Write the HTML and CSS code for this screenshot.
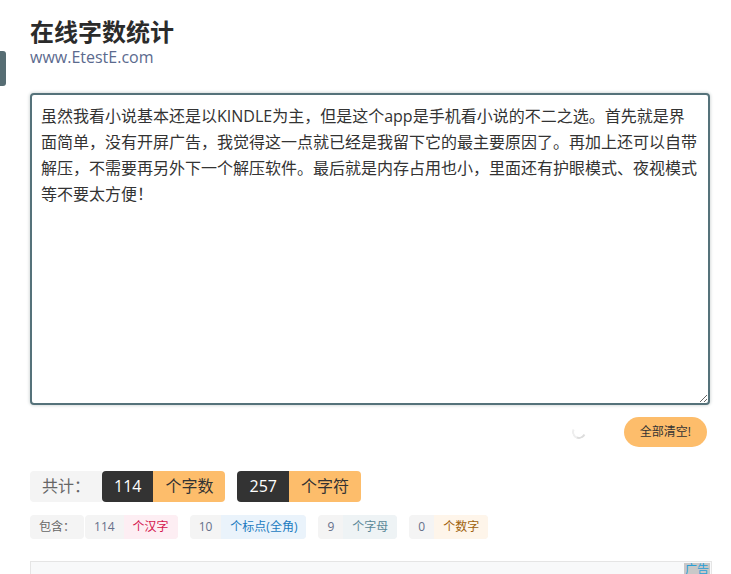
FILE: index.html
```html
<!DOCTYPE html>
<html lang="zh-CN">
<head>
<meta charset="utf-8">
<title>在线字数统计</title>
<link rel="stylesheet" href="styles.css">
</head>
<body>
<div class="side-tab"></div>
<div class="page">
  <header class="head">
    <h1 class="title">在线字数统计</h1>
    <div class="site">www.EtestE.com</div>
  </header>
  <textarea class="editor" spellcheck="false">虽然我看小说基本还是以KINDLE为主，但是这个app是手机看小说的不二之选。首先就是界
面简单，没有开屏广告，我觉得这一点就已经是我留下它的最主要原因了。再加上还可以自带
解压，不需要再另外下一个解压软件。最后就是内存占用也小，里面还有护眼模式、夜视模式
等不要太方便！</textarea>
  <div class="actions">
    <span class="spinner"></span>
    <button class="clear-btn">全部清空!</button>
  </div>
  <div class="totals">
    <span class="lbl">共计：</span>
    <span class="pair"><span class="num">114</span><span class="unit">个字数</span></span>
    <span class="pair"><span class="num">257</span><span class="unit">个字符</span></span>
  </div>
  <div class="detail">
    <span class="dlbl">包含：</span>
    <span class="dpair"><span class="dnum">114</span><span class="dunit hanzi">个汉字</span></span>
    <span class="dpair"><span class="dnum">10</span><span class="dunit punct">个标点(全角)</span></span>
    <span class="dpair"><span class="dnum">9</span><span class="dunit letter">个字母</span></span>
    <span class="dpair"><span class="dnum">0</span><span class="dunit digit">个数字</span></span>
  </div>
  <div class="ad"><span class="ad-tag">广告</span></div>
</div>
</body>
</html>
```
FILE: styles.css
```css
html, body {
  margin: 0;
  padding: 0;
  background: #fff;
}
body {
  font-family: "Open Sans", "Noto Sans CJK SC", sans-serif;
  color: #333;
  overflow: hidden;
}
.side-tab {
  position: absolute;
  left: 0;
  top: 51px;
  width: 6px;
  height: 35px;
  background: #566d73;
  border-radius: 0 3px 3px 0;
}
.page {
  padding: 0 21px 0 30px;
}
.head {
  padding-top: 16px;
}
.title {
  margin: 0;
  font-size: 24px;
  line-height: 32px;
  font-weight: bold;
  color: #2b2b2b;
}
.site {
  margin-top: -1px;
  font-size: 16px;
  line-height: 20px;
  color: #5b6a8e;
}
.editor {
  display: block;
  box-sizing: border-box;
  width: 680px;
  height: 312px;
  margin: 26px 0 0 0;
  padding: 8px 4px 8px 9px;
  border: 2px solid #55727a;
  border-radius: 4px;
  box-shadow: 0 0 3px 1px #d9dede;
  font-family: "Open Sans", "Noto Sans CJK SC", sans-serif;
  font-size: 16px;
  line-height: 26px;
  color: #333;
  white-space: pre;
  overflow: hidden;
  outline: none;
}
.actions {
  display: flex;
  justify-content: flex-end;
  align-items: center;
  gap: 38px;
  margin-top: 12px;
  padding-right: 3px;
  width: 677px;
}
.spinner {
  width: 10px;
  height: 10px;
  border: 2px solid transparent;
  border-bottom-color: #ddd;
  border-left-color: #eee;
  border-radius: 50%;
  transform: rotate(-20deg);
}
.clear-btn {
  height: 30px;
  padding: 0 16px;
  border: none;
  border-radius: 15px;
  background: #fdbd6b;
  color: #333;
  font-family: "Open Sans", "Noto Sans CJK SC", sans-serif;
  font-size: 12px;
  line-height: 30px;
}
.totals {
  display: flex;
  gap: 12px;
  margin-top: 24px;
  font-size: 16px;
  line-height: 31px;
}
.lbl {
  padding: 0 12px;
  background: #f4f4f4;
  border-radius: 4px 0 0 4px;
  color: #666;
  margin-right: -12px;
}
.pair {
  display: flex;
  border-radius: 4px;
  overflow: hidden;
}
.num {
  padding: 0 12px;
  background: #333;
  color: #fff;
}
.unit {
  padding: 0 12px;
  background: #fdbd6b;
  color: #333;
}
.detail {
  display: flex;
  gap: 12px;
  margin-top: 13px;
  font-size: 12px;
  line-height: 24px;
}
.dlbl {
  padding: 0 9px;
  background: #f4f4f4;
  border-radius: 4px;
  color: #666;
  margin-right: -11px;
}
.dpair {
  display: flex;
  border-radius: 4px;
  overflow: hidden;
  background: #f4f4f4;
}
.dnum {
  padding: 0 9px;
  color: #66708a;
}
.dunit {
  padding: 0 9px;
}
.hanzi { background: #fdeef3; color: #d4164e; }
.punct { background: #eaf3fb; color: #1b7bc0; }
.letter { background: #eef3f5; color: #5a8898; }
.digit { background: #fef5ea; color: #a0620c; }
.ad {
  position: relative;
  margin-top: 22px;
  width: 680px;
  height: 40px;
  background: #f8f9fa;
  border: 1px solid #e5e5e5;
}
.ad-tag {
  position: absolute;
  top: 1px;
  right: 1px;
  padding: 0 1px;
  background: #c8c8c8;
  color: #2a9fd6;
  font-size: 12px;
  line-height: 14px;
}
```
